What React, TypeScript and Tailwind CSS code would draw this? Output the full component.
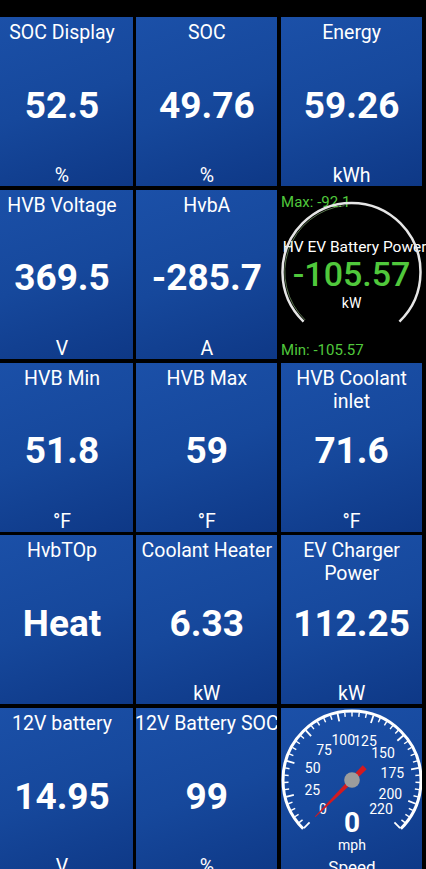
import React from "react";

const tileBg =
  "bg-[linear-gradient(160deg,#1b50a8_0%,#16489c_50%,#0e3886_100%)]";

function pt(cx: number, cy: number, r: number, deg: number): [number, number] {
  const a = (deg * Math.PI) / 180;
  return [cx + r * Math.sin(a), cy - r * Math.cos(a)];
}

function arcPath(cx: number, cy: number, r: number, a0: number, a1: number) {
  const [x0, y0] = pt(cx, cy, r, a0);
  const [x1, y1] = pt(cx, cy, r, a1);
  const large = a1 - a0 > 180 ? 1 : 0;
  return `M ${x0} ${y0} A ${r} ${r} 0 ${large} 1 ${x1} ${y1}`;
}

type TileProps = { title: string; value: string; unit?: string; nowrap?: boolean };

function Tile({ title, value, unit, nowrap }: TileProps) {
  return (
    <div className={`grid grid-cols-1 grid-rows-1 overflow-hidden text-white ${tileBg}`}>
      <div className="[grid-area:1/1] self-start flex justify-center px-[2px] pt-[4px] text-center text-[19.5px] leading-[23px]">
        <span className={nowrap ? "shrink-0 whitespace-nowrap" : ""}>{title}</span>
      </div>
      <div className="[grid-area:1/1] self-center justify-self-center pt-[7px] text-[37px] font-bold leading-none">
        {value}
      </div>
      {unit ? (
        <div className="[grid-area:1/1] self-end justify-self-center text-[19.5px] leading-[20px]">
          {unit}
        </div>
      ) : null}
    </div>
  );
}

function PowerTile() {
  const cx = 70.5;
  const cy = 82;
  const r = 69;
  return (
    <div className="grid grid-cols-1 grid-rows-1 bg-black text-white">
      <div className="[grid-area:1/1] self-start justify-self-start pt-[4px] text-[15px] leading-[17px] text-[#50c83c]">
        Max: -92.1
      </div>
      <div className="[grid-area:1/1] self-end justify-self-start text-[15px] leading-[17px] text-[#50c83c]">
        Min: -105.57
      </div>
      <div className="[grid-area:1/1] self-start flex flex-col items-center pt-[49px]">
        <div className="flex w-full justify-center pl-[6px]">
          <span className="shrink-0 whitespace-nowrap text-[15.5px] leading-[17px]">HV EV Battery Power</span>
        </div>
        <div className="mt-[1px] text-[34px] font-medium leading-[34px] text-[#50c83c]">-105.57</div>
        <div className="mt-[4px] text-[14px] leading-[16px]">kW</div>
      </div>
      <svg
        className="[grid-area:1/1] pointer-events-none block h-[169px] w-[141px]"
        viewBox="0 0 141 169"
      >
        <path d={arcPath(cx, cy, r, -136, 136)} stroke="#e6e6e6" strokeWidth={2.5} fill="none" />
        <path
          d={arcPath(cx, cy, r - 2.3, -136, -6)}
          stroke="#9fd08a"
          strokeWidth={0.8}
          fill="none"
          opacity={0.7}
        />
      </svg>
    </div>
  );
}

function SpeedTile() {
  const cx = 71;
  const cy = 72;
  const r = 69;
  const a0 = -135;
  const sweep = 270;
  const max = 220;
  const ang = (v: number) => a0 + (v / max) * sweep;
  const ticks: number[] = [];
  for (let v = 0; v <= max; v += 5) ticks.push(v);
  const labels = [0, 25, 50, 75, 100, 125, 150, 175, 200, 220];

  const a = ang(0);
  const d = pt(0, 0, 1, a);
  const p: [number, number] = [-d[1], d[0]];
  const P = (along: number, side: number) =>
    `${cx + d[0] * along + p[0] * side},${cy + d[1] * along + p[1] * side}`;
  const needle = [P(52, 0.5), P(0, 2.3), P(-18, 2.8), P(-18, -2.8), P(0, -2.3), P(52, -0.5)].join(" ");

  return (
    <div className={`grid grid-cols-1 grid-rows-1 overflow-hidden text-white ${tileBg}`}>
      <svg className="[grid-area:1/1] block h-[169px] w-[141px]" viewBox="0 0 141 169">
        <path d={arcPath(cx, cy, r, a0, a0 + sweep)} stroke="#ffffff" strokeWidth={3} fill="none" />
        {ticks.map((v) => {
          const major = v % 25 === 0 || v === max;
          const len = major ? 8 : 4.5;
          const [x1, y1] = pt(cx, cy, r - 1, ang(v));
          const [x2, y2] = pt(cx, cy, r - 1 - len, ang(v));
          return (
            <line
              key={v}
              x1={x1}
              y1={y1}
              x2={x2}
              y2={y2}
              stroke="#ffffff"
              strokeWidth={major ? 1.8 : 1.4}
            />
          );
        })}
        {labels.map((v) => {
          const [x, y] = pt(cx, cy, 41, ang(v));
          return (
            <text
              key={v}
              x={x}
              y={y}
              fill="#ffffff"
              fontSize={14}
              textAnchor="middle"
              dominantBaseline="central"
            >
              {v}
            </text>
          );
        })}
        <polygon points={needle} fill="#d21a20" />
        <circle cx={cx} cy={cy} r={7.8} fill="#9c9c9c" />
        <text x={cx} y={123.7} fill="#ffffff" fontSize={28} fontWeight={700} textAnchor="middle">
          0
        </text>
        <text x={cx} y={142.4} fill="#ffffff" fontSize={14} textAnchor="middle">
          mph
        </text>
        <text x={cx} y={164.8} fill="#ffffff" fontSize={17} textAnchor="middle">
          Speed
        </text>
      </svg>
    </div>
  );
}

export default function App() {
  return (
    <div className="h-[869px] w-[426px] overflow-hidden bg-black pt-[17px] font-['Roboto',sans-serif]">
      <div className="ml-[-8.5px] grid grid-cols-[repeat(3,141px)] auto-rows-[169px] gap-x-[3.8px] gap-y-[3.75px]">
        <Tile title="SOC Display" value="52.5" unit="%" />
        <Tile title="SOC" value="49.76" unit="%" />
        <Tile title="Energy" value="59.26" unit="kWh" />

        <Tile title="HVB Voltage" value="369.5" unit="V" />
        <Tile title="HvbA" value="-285.7" unit="A" />
        <PowerTile />

        <Tile title="HVB Min" value="51.8" unit="°F" />
        <Tile title="HVB Max" value="59" unit="°F" />
        <Tile title="HVB Coolant inlet" value="71.6" unit="°F" />

        <Tile title="HvbTOp" value="Heat" />
        <Tile title="Coolant Heater" value="6.33" unit="kW" />
        <Tile title="EV Charger Power" value="112.25" unit="kW" />

        <Tile title="12V battery" value="14.95" unit="V" />
        <Tile title="12V Battery SOC" value="99" unit="%" nowrap />
        <SpeedTile />
      </div>
    </div>
  );
}
